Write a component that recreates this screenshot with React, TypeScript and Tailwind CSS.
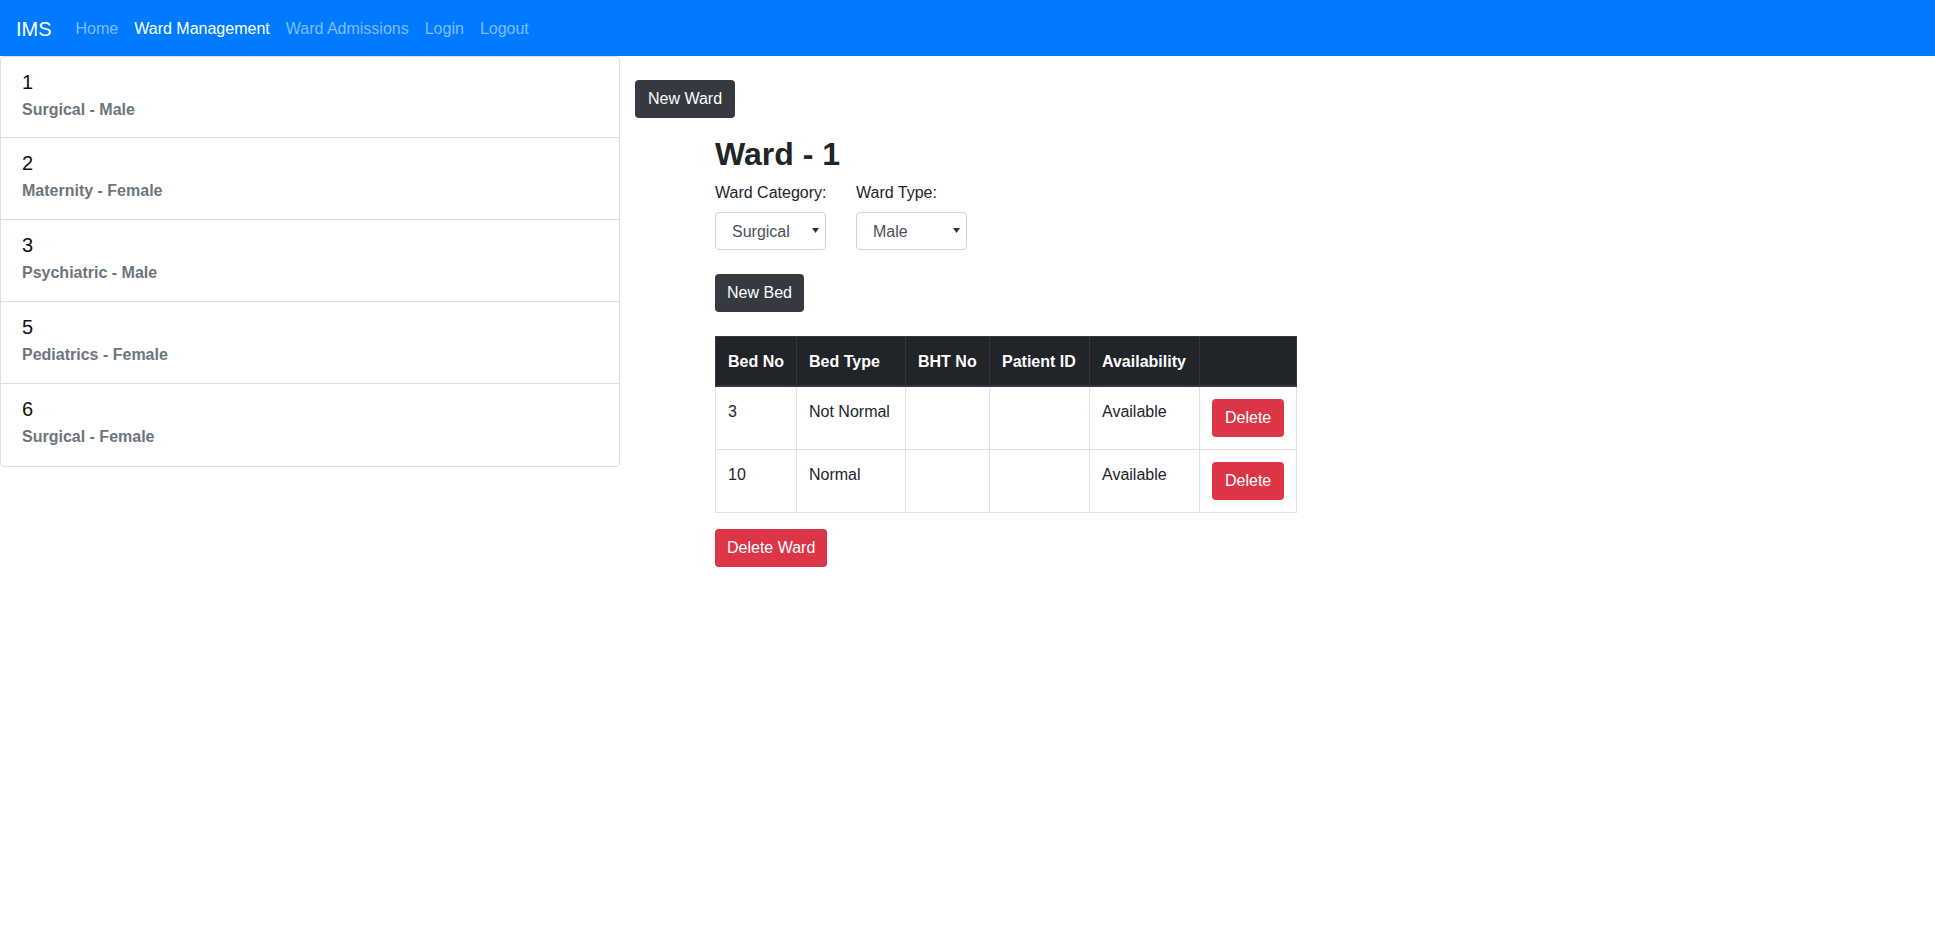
import React from "react";

const wards = [
  { no: "1", desc: "Surgical - Male" },
  { no: "2", desc: "Maternity - Female" },
  { no: "3", desc: "Psychiatric - Male" },
  { no: "5", desc: "Pediatrics - Female" },
  { no: "6", desc: "Surgical - Female" },
];

const beds = [
  { no: "3", type: "Not Normal", bht: "", pid: "", avail: "Available" },
  { no: "10", type: "Normal", bht: "", pid: "", avail: "Available" },
];

function Caret() {
  return (
    <svg
      className="absolute right-[7px] top-[16px] pointer-events-none"
      width="7"
      height="5"
      viewBox="0 0 7 5"
    >
      <path d="M0 0 H7 L3.5 5 Z" fill="#333" />
    </svg>
  );
}

function FakeSelect({ value }: { value: string }) {
  return (
    <div className="relative w-[111px] h-[38px]">
      <select
        defaultValue={value}
        className="appearance-none w-full h-full border border-[#ced4da] rounded-[4px] bg-white pl-[16px] pr-[20px] pt-[1px] text-[16px] leading-[24px] text-[#495057] outline-none"
      >
        <option>{value}</option>
      </select>
      <Caret />
    </div>
  );
}

export default function App() {
  return (
    <div
      className="min-h-[947px] bg-white text-[#212529] text-[16px] leading-[24px]"
      style={{ fontFamily: '"Liberation Sans", Arial, sans-serif' }}
    >
      <nav className="h-[56px] bg-[#007bff] flex items-center px-[16px] pt-[1px]">
        <span className="text-[20px] leading-[30px] text-white mr-[16px]">IMS</span>
        <div className="flex">
          <span className="px-[8px] text-white/50">Home</span>
          <span className="px-[8px] text-white">Ward Management</span>
          <span className="px-[8px] text-white/50">Ward Admissions</span>
          <span className="px-[8px] text-white/50">Login</span>
          <span className="px-[8px] text-white/50">Logout</span>
        </div>
      </nav>

      <div className="flex">
        <div className="w-[620px] shrink-0">
          <div className="border border-[#dfdfdf] rounded-[4px] divide-y divide-[#dfdfdf]">
            {wards.map((w) => (
              <div key={w.no} className="h-[82px] first:h-[81px] px-[21px] pt-[13px]">
                <div className="text-[20px] leading-[24px] text-[#111] mb-[4px]">{w.no}</div>
                <div className="text-[16px] leading-[24px] font-semibold text-[#6c757d]">{w.desc}</div>
              </div>
            ))}
          </div>
        </div>

        <div className="pl-[15px] pt-[24px] flex-1">
          <button className="h-[38px] px-[13px] rounded-[4px] bg-[#343a40] text-white text-[16px] leading-[24px]">
            New Ward
          </button>

          <div className="ml-[80px] mt-[17px]">
            <h2 className="text-[32px] leading-[38.4px] font-semibold text-[#212529] mb-[8px]">Ward - 1</h2>

            <div className="flex">
              <div className="w-[141px]">
                <div className="mb-[7px] whitespace-nowrap">Ward Category:</div>
                <FakeSelect value="Surgical" />
              </div>
              <div className="w-[111px]">
                <div className="mb-[7px] whitespace-nowrap">Ward Type:</div>
                <FakeSelect value="Male" />
              </div>
            </div>

            <button className="mt-[24px] h-[38px] px-[12px] rounded-[4px] bg-[#343a40] text-white text-[16px] leading-[24px]">
              New Bed
            </button>

            <table className="mt-[24px] w-[581px] table-fixed border-collapse text-left">
              <thead>
                <tr className="bg-[#212529] text-white">
                  <th className="w-[81px] border border-[#32383e] border-b-2 px-[12px] pt-[13px] pb-[11px] font-bold align-bottom">Bed No</th>
                  <th className="w-[109px] border border-[#32383e] border-b-2 px-[12px] pt-[13px] pb-[11px] font-bold align-bottom">Bed Type</th>
                  <th className="w-[84px] border border-[#32383e] border-b-2 px-[12px] pt-[13px] pb-[11px] font-bold align-bottom whitespace-nowrap">BHT No</th>
                  <th className="w-[100px] border border-[#32383e] border-b-2 px-[12px] pt-[13px] pb-[11px] font-bold align-bottom whitespace-nowrap">Patient ID</th>
                  <th className="w-[110px] border border-[#32383e] border-b-2 px-[12px] pt-[13px] pb-[11px] font-bold align-bottom">Availability</th>
                  <th className="w-[97px] border border-[#32383e] border-b-2 px-[12px] pt-[13px] pb-[11px] align-bottom"></th>
                </tr>
              </thead>
              <tbody>
                {beds.map((b) => (
                  <tr key={b.no}>
                    <td className="border border-[#dee2e6] px-[12px] pt-[13px] pb-[11px] align-top">{b.no}</td>
                    <td className="border border-[#dee2e6] px-[12px] pt-[13px] pb-[11px] align-top whitespace-nowrap">{b.type}</td>
                    <td className="border border-[#dee2e6] px-[12px] pt-[13px] pb-[11px] align-top">{b.bht}</td>
                    <td className="border border-[#dee2e6] px-[12px] pt-[13px] pb-[11px] align-top">{b.pid}</td>
                    <td className="border border-[#dee2e6] px-[12px] pt-[13px] pb-[11px] align-top">{b.avail}</td>
                    <td className="border border-[#dee2e6] p-[12px] align-top">
                      <button className="h-[38px] px-[13px] rounded-[4px] bg-[#dc3545] text-white text-[16px] leading-[24px]">
                        Delete
                      </button>
                    </td>
                  </tr>
                ))}
              </tbody>
            </table>

            <button className="mt-[16px] h-[38px] px-[12px] rounded-[4px] bg-[#dc3545] text-white text-[16px] leading-[24px]">
              Delete Ward
            </button>
          </div>
        </div>
      </div>
    </div>
  );
}
